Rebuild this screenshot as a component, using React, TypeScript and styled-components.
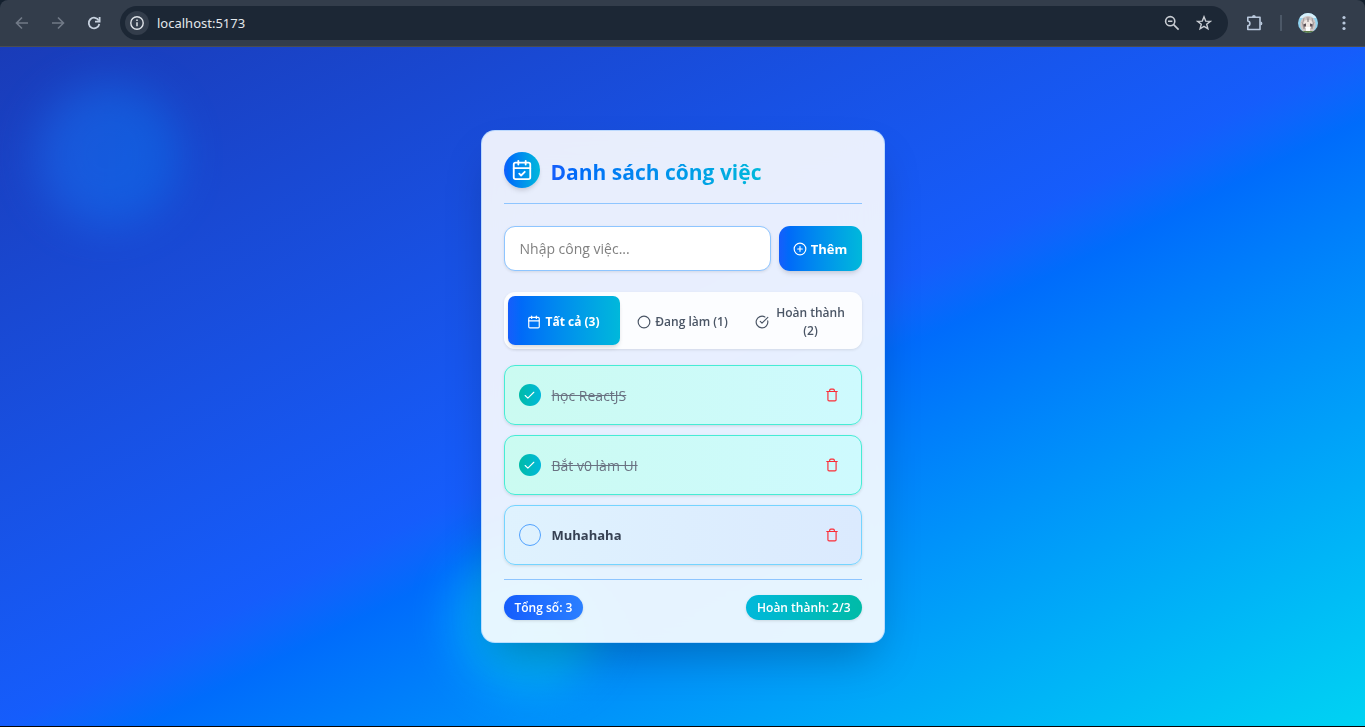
import React, { useState } from 'react';
import styled, { createGlobalStyle, css } from 'styled-components';
import { Calendar, CalendarCheck, Check, Circle, CircleCheckBig, CirclePlus, Trash } from 'lucide-react';

const GlobalStyle = createGlobalStyle`
  *, *::before, *::after { box-sizing: border-box; }
  body { margin: 0; font-family: 'Open Sans', 'Noto Sans', sans-serif; }
  h1, ul { margin: 0; padding: 0; }
  button, input { font-family: inherit; }
  button { cursor: pointer; border: 0; padding: 0; background: none; }
`;

const blue800 = 'oklch(42.4% 0.199 265.638)';
const blue600 = 'oklch(54.6% 0.245 262.881)';
const blue500 = 'oklch(62.3% 0.214 259.815)';
const cyan400 = 'oklch(78.9% 0.154 211.53)';
const cyan500 = 'oklch(71.5% 0.143 215.221)';
const teal500 = 'oklch(70.4% 0.14 182.503)';
const brand = `linear-gradient(to right in oklab, ${blue600}, ${cyan500})`;

const Window = styled.div`
  display: flex;
  flex-direction: column;
  min-height: 100vh;
  background: #14202e;
  border-bottom: 1px solid #05070a;
`;

const Toolbar = styled.header`
  display: flex;
  align-items: center;
  height: 47px;
  padding: 0 11px 0 12px;
  border-bottom: 1px solid #4a4d50;
  border-radius: 8px 8px 0 0;
  background: #333d4b;
`;

const NavButton = styled.button<{ $dim?: boolean }>`
  display: grid;
  place-items: center;
  width: 20px;
  height: 20px;
  margin-right: 16px;
  color: ${p => (p.$dim ? '#717a87' : '#c7d1de')};
`;

const AddressBar = styled.div`
  display: flex;
  flex: 1;
  align-items: center;
  height: 34px;
  padding: 0 14px 0 5px;
  border-radius: 17px;
  background: #1c2735;
`;

const SiteInfo = styled.button`
  display: grid;
  place-items: center;
  width: 24px;
  height: 24px;
  border-radius: 50%;
  background: #333d4b;
  color: #dfe3e8;
`;

const Address = styled.input`
  flex: 1;
  min-width: 0;
  margin-left: 8px;
  padding: 0;
  border: 0;
  outline: 0;
  background: none;
  color: #e3e7ec;
  font-family: 'Noto Sans', sans-serif;
  font-size: 13px;
`;

const BarButton = styled.button`
  display: grid;
  place-items: center;
  width: 20px;
  height: 20px;
  margin-left: 12px;
  color: #c9cdd3;
`;

const ToolGroup = styled.div`
  display: flex;
  align-items: center;
  gap: 16px;
  margin-left: 16px;
  color: #b9c8dc;
`;

const ToolButton = styled.button`
  display: grid;
  place-items: center;
  width: 20px;
  height: 20px;
  color: inherit;
`;

const Divider = styled.span`
  width: 2px;
  height: 16px;
  background: #4c5867;
`;

const Page = styled.main`
  position: relative;
  display: flex;
  flex: 1;
  align-items: center;
  justify-content: center;
  overflow: hidden;
  padding: 16px;
  background: linear-gradient(to bottom right in oklab, ${blue800}, ${blue600}, ${cyan400});
`;

const Blob = styled.span<{ $place: 'top' | 'bottom' }>`
  position: absolute;
  width: 144px;
  height: 144px;
  border-radius: 50%;
  filter: blur(22px);
  ${p =>
    p.$place === 'top'
      ? css`
          top: 36px;
          left: 36px;
          background: linear-gradient(to right in oklab, #1a7dff, #0084ff);
          opacity: 0.38;
        `
      : css`
          bottom: 36px;
          left: calc(100% / 3);
          background: linear-gradient(to right in oklab, #00ccff, #00d8e8);
          opacity: 0.52;
        `}
`;

const Card = styled.section`
  position: relative;
  width: 100%;
  max-width: 404px;
  padding: 21px 22px 22px;
  border: 1px solid rgba(142, 197, 255, 0.5);
  border-radius: 14px;
  background: rgba(255, 255, 255, 0.9);
  backdrop-filter: blur(22px);
  box-shadow: 0 22px 45px -11px rgba(0, 0, 0, 0.25);
`;

const CardHeader = styled.header`
  display: flex;
  align-items: center;
  gap: 11px;
  padding-bottom: 15px;
  border-bottom: 1px solid #8ec5ff;
`;

const HeaderIcon = styled.span`
  display: grid;
  place-items: center;
  width: 36px;
  height: 36px;
  border-radius: 50%;
  background: ${brand};
  color: #fff;
  box-shadow: 0 4px 5px -1px rgba(0, 0, 0, 0.1), 0 2px 4px -2px rgba(0, 0, 0, 0.1);
`;

const Title = styled.h1`
  background: ${brand};
  background-clip: text;
  color: transparent;
  font-size: 21px;
  font-weight: 700;
  line-height: 32px;
  padding-top: 3px;
`;

const AddForm = styled.form`
  display: flex;
  gap: 8px;
  margin-top: 22px;
`;

const TaskInput = styled.input`
  flex: 1;
  min-width: 0;
  height: 45px;
  padding: 0 15px;
  border: 1px solid #8ec5ff;
  border-radius: 11px;
  background: #fff;
  color: #364153;
  font-size: 14px;
  box-shadow: 0 1px 3px rgba(0, 0, 0, 0.1);
  &::placeholder { color: #808080; opacity: 1; }
`;

const AddButton = styled.button`
  display: flex;
  align-items: center;
  justify-content: center;
  gap: 4px;
  width: 83px;
  height: 45px;
  border-radius: 11px;
  background: ${brand};
  color: #fff;
  font-size: 13px;
  font-weight: 700;
  box-shadow: 0 4px 5px -1px rgba(0, 0, 0, 0.1), 0 2px 4px -2px rgba(0, 0, 0, 0.1);
`;

const Tabs = styled.div`
  display: grid;
  grid-template-columns: repeat(3, 1fr);
  gap: 7px;
  margin-top: 21px;
  padding: 4px;
  border-radius: 11px;
  background: rgba(255, 255, 255, 0.85);
  box-shadow: 0 1px 3px rgba(0, 0, 0, 0.1);
`;

const Tab = styled.button<{ $active: boolean }>`
  display: flex;
  align-items: center;
  justify-content: center;
  gap: 4px;
  min-height: 49px;
  padding: 2px 9px 0;
  border-radius: 7px;
  color: #4a5565;
  font-size: 12px;
  font-weight: 600;
  line-height: 18px;
  svg { flex: none; }
  ${p =>
    p.$active &&
    css`
      background: ${brand};
      color: #fff;
      font-weight: 700;
      box-shadow: 0 4px 5px -1px rgba(0, 0, 0, 0.1), 0 2px 4px -2px rgba(0, 0, 0, 0.1);
    `}
`;

const TaskList = styled.ul`
  display: flex;
  flex-direction: column;
  gap: 10px;
  margin-top: 16px;
  list-style: none;
`;

const TaskRow = styled.li<{ $done: boolean }>`
  display: flex;
  align-items: center;
  height: 60px;
  padding: 0 22px 0 14px;
  border: 1px solid ${p => (p.$done ? '#46ecd5' : '#74d4ff')};
  border-radius: 11px;
  background: ${p =>
    p.$done
      ? 'linear-gradient(to right in oklab, #cbfbf1, #cefafe)'
      : 'linear-gradient(to right in oklab, #dff2fe, #dbeafe)'};
  box-shadow: 0 1px 3px rgba(0, 0, 0, 0.12);
`;

const TaskLabel = styled.label<{ $done: boolean }>`
  display: flex;
  flex: 1;
  align-items: center;
  gap: 11px;
  color: ${p => (p.$done ? '#6a7282' : '#364153')};
  font-size: ${p => (p.$done ? '14px' : '13px')};
  font-weight: ${p => (p.$done ? 400 : 700)};
  text-decoration: ${p => (p.$done ? 'line-through' : 'none')};
`;

const Tick = styled.span<{ $done: boolean }>`
  display: grid;
  place-items: center;
  width: 22px;
  height: 22px;
  border: ${p => (p.$done ? '0' : '1px solid #51a2ff')};
  border-radius: 50%;
  background: ${p => (p.$done ? `linear-gradient(to right in oklab, ${teal500}, ${cyan500})` : 'none')};
  color: #fff;
  > * { grid-area: 1 / 1; }
`;

const TickInput = styled.input`
  appearance: none;
  width: 22px;
  height: 22px;
  margin: 0;
  border-radius: 50%;
  cursor: pointer;
`;

const DeleteButton = styled.button`
  display: grid;
  place-items: center;
  width: 14px;
  height: 28px;
  color: #fb2c36;
`;

const CardFooter = styled.footer`
  display: flex;
  justify-content: space-between;
  margin-top: 14px;
  padding-top: 15px;
  border-top: 1px solid #8ec5ff;
`;

const Badge = styled.span<{ $tone: 'blue' | 'teal' }>`
  padding: 0 11px;
  border-radius: 13px;
  background: ${p =>
    p.$tone === 'blue'
      ? `linear-gradient(to right in oklab, ${blue600}, ${blue500})`
      : `linear-gradient(to right in oklab, ${cyan500}, ${teal500})`};
  color: #fff;
  font-size: 12px;
  font-weight: 600;
  line-height: 25px;
  box-shadow: 0 1px 3px rgba(0, 0, 0, 0.12);
`;

type Task = { id: number; text: string; done: boolean };
type Filter = 'all' | 'active' | 'done';

const initialTasks: Task[] = [
  { id: 1, text: 'học ReactJS', done: true },
  { id: 2, text: 'Bắt v0 làm UI', done: true },
  { id: 3, text: 'Muhahaha', done: false },
];

const stroke = { fill: 'none', stroke: 'currentColor', strokeWidth: 1.6 };

function BrowserBar() {
  return (
    <Toolbar>
      <NavButton $dim aria-label="Back">
        <svg width="14" height="14" viewBox="0 0 14 14" {...stroke}><path d="M13 7H2M7 1.5 1.5 7 7 12.5" /></svg>
      </NavButton>
      <NavButton $dim aria-label="Forward">
        <svg width="14" height="14" viewBox="0 0 14 14" {...stroke}><path d="M1 7h11M7 1.5 12.5 7 7 12.5" /></svg>
      </NavButton>
      <NavButton aria-label="Reload">
        <svg width="14" height="14" viewBox="0 0 14 14" {...stroke} strokeWidth="1.8">
          <path d="M11.8 4.6A5.3 5.3 0 1 0 12.3 8" />
          <path d="M12.6 1v4.6H8" />
        </svg>
      </NavButton>
      <AddressBar>
        <SiteInfo aria-label="Site information">
          <svg width="14" height="14" viewBox="0 0 14 14" {...stroke} strokeWidth="1.4">
            <circle cx="7" cy="7" r="6.2" />
            <path d="M7 6.2v4M7 3.6v1.5" strokeWidth="1.5" />
          </svg>
        </SiteInfo>
        <Address aria-label="Address" defaultValue="localhost:5173" />
        <BarButton aria-label="Zoom">
          <svg width="16" height="16" viewBox="0 0 16 16" {...stroke}>
            <circle cx="6.2" cy="6.2" r="4.6" />
            <path d="M9.6 9.6 14.6 14.6M4 6.2h4.4" />
          </svg>
        </BarButton>
        <BarButton aria-label="Bookmark">
          <svg width="16" height="16" viewBox="0 0 16 16" {...stroke} strokeWidth="1.4">
            <path d="m8 1.8 1.7 4.3 4.6.3-3.6 2.9 1.2 4.5L8 11.3l-3.9 2.5 1.2-4.5L1.7 6.4l4.6-.3z" />
          </svg>
        </BarButton>
      </AddressBar>
      <ToolGroup>
        <ToolButton aria-label="Extensions">
          <svg width="18" height="18" viewBox="0 0 18 18" fill="currentColor">
            <path
              d="M2.8 3.3H15v12.200H2.800v-3.700c2.800-.5 2.800-4.300 0-4.800z"
              fill="none"
              stroke="currentColor"
              strokeWidth="1.6"
              strokeLinejoin="round"
            />
            <path d="M7 2.900a1.900 1.900 0 0 1 3.800 0zM15.500 7.500a1.900 1.900 0 0 1 0 3.800z" />
          </svg>
        </ToolButton>
        <Divider />
        <ToolButton aria-label="Profile">
          <svg width="20" height="20" viewBox="0 0 20 20">
            <clipPath id="avatar"><circle cx="10" cy="10" r="10" /></clipPath>
            <g clipPath="url(#avatar)">
              <path d="M0 0h20v20H0z" fill="#8fd3f0" />
              <path d="M0 0h20v5H0z" fill="#d6effa" />
              <path d="M2.500 14C1.500 7 5 3 10 3s8.500 4 7.500 11l-2 4h-11z" fill="#cfc6c5" />
              <path d="M6 9c1-3 7-3 8 0l-1 6H7z" fill="#efe7e3" />
              <path d="M4 9l2 7 1.500-6M16 9l-2 7-1.500-6M9 4l1 5 1-5M6 5 5 9M14 5l1 4" fill="none" stroke="#a39a9b" />
              <path d="M5.500 11h2.500v2.500H5.500zM12 11h2.500v2.500H12z" fill="#5b5158" />
              <path d="M8 14h4v4H8z" fill="#fff" />
              <path d="M3 18h14v3H3z" fill="#5c7a45" />
            </g>
          </svg>
        </ToolButton>
        <ToolButton aria-label="Menu">
          <svg width="4" height="16" viewBox="0 0 4 16" fill="currentColor">
            <circle cx="2" cy="2.500" r="1.600" /><circle cx="2" cy="8" r="1.600" /><circle cx="2" cy="13.500" r="1.600" />
          </svg>
        </ToolButton>
      </ToolGroup>
    </Toolbar>
  );
}

export default function App() {
  const [tasks, setTasks] = useState(initialTasks);
  const [filter, setFilter] = useState<Filter>('all');
  const [draft, setDraft] = useState('');

  const doneCount = tasks.filter(t => t.done).length;
  const visible = tasks.filter(t => filter === 'all' || t.done === (filter === 'done'));

  const addTask = (e: React.FormEvent) => {
    e.preventDefault();
    if (!draft.trim()) return;
    setTasks([...tasks, { id: Date.now(), text: draft.trim(), done: false }]);
    setDraft('');
  };
  const toggle = (id: number) => setTasks(tasks.map(t => (t.id === id ? { ...t, done: !t.done } : t)));
  const remove = (id: number) => setTasks(tasks.filter(t => t.id !== id));

  return (
    <Window>
      <GlobalStyle />
      <BrowserBar />
      <Page>
        <Blob $place="top" />
        <Blob $place="bottom" />
        <Card>
          <CardHeader>
            <HeaderIcon><CalendarCheck size={22} /></HeaderIcon>
            <Title>Danh sách công việc</Title>
          </CardHeader>
          <AddForm onSubmit={addTask}>
            <TaskInput
              aria-label="Công việc mới"
              placeholder="Nhập công việc..."
              value={draft}
              onChange={e => setDraft(e.target.value)}
            />
            <AddButton type="submit"><CirclePlus size={14} />Thêm</AddButton>
          </AddForm>
          <Tabs>
            <Tab $active={filter === 'all'} onClick={() => setFilter('all')}>
              <Calendar size={14} /><span>{`Tất cả (${tasks.length})`}</span>
            </Tab>
            <Tab $active={filter === 'active'} onClick={() => setFilter('active')}>
              <Circle size={14} /><span>{`Đang làm (${tasks.length - doneCount})`}</span>
            </Tab>
            <Tab $active={filter === 'done'} onClick={() => setFilter('done')}>
              <CircleCheckBig size={14} /><span>{`Hoàn thành (${doneCount})`}</span>
            </Tab>
          </Tabs>
          <TaskList>
            {visible.map(task => (
              <TaskRow key={task.id} $done={task.done}>
                <TaskLabel $done={task.done}>
                  <Tick $done={task.done}>
                    <TickInput type="checkbox" checked={task.done} onChange={() => toggle(task.id)} />
                    {task.done && <Check size={13} />}
                  </Tick>
                  {task.text}
                </TaskLabel>
                <DeleteButton aria-label={`Xóa ${task.text}`} onClick={() => remove(task.id)}>
                  <Trash size={14} />
                </DeleteButton>
              </TaskRow>
            ))}
          </TaskList>
          <CardFooter>
            <Badge $tone="blue">{`Tổng số: ${tasks.length}`}</Badge>
            <Badge $tone="teal">{`Hoàn thành: ${doneCount}/${tasks.length}`}</Badge>
          </CardFooter>
        </Card>
      </Page>
    </Window>
  );
}
